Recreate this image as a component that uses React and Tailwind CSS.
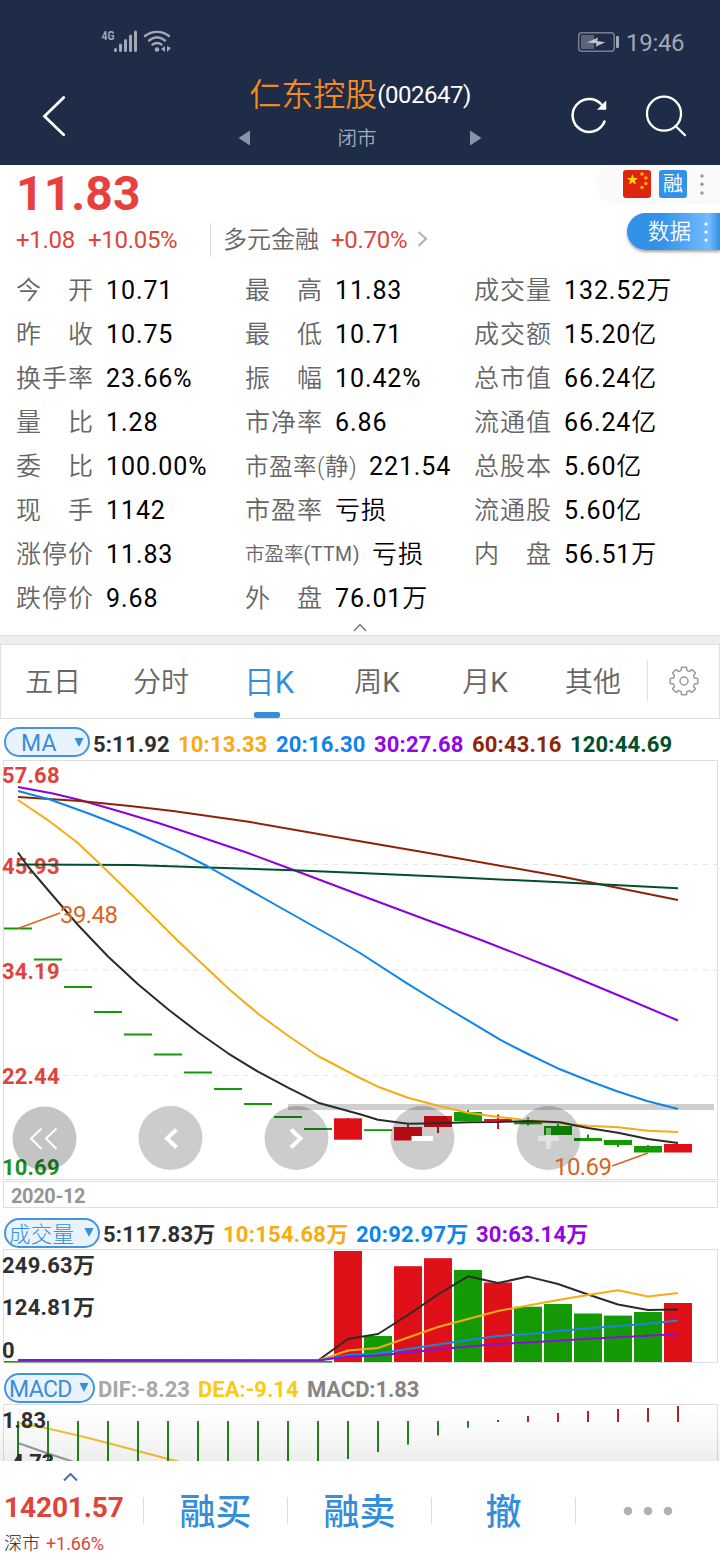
import React from "react";

const UI = "font-[Roboto,'Noto_Sans_CJK_SC',sans-serif]";

const stats = [
  [["今", "开"], "10.71", ["最", "高"], "11.83", "成交量", "132.52万"],
  [["昨", "收"], "10.75", ["最", "低"], "10.71", "成交额", "15.20亿"],
  ["换手率", "23.66%", ["振", "幅"], "10.42%", "总市值", "66.24亿"],
  [["量", "比"], "1.28", "市净率", "6.86", "流通值", "66.24亿"],
  [["委", "比"], "100.00%", "市盈率(静)", "221.54", "总股本", "5.60亿"],
  [["现", "手"], "1142", "市盈率", "亏损", "流通股", "5.60亿"],
  ["涨停价", "11.83", "市盈率(TTM)", "亏损", ["内", "盘"], "56.51万"],
  ["跌停价", "9.68", ["外", "盘"], "76.01万", null, null],
];

const GREEN = "#149a05";
const RED = "#df1017";

const maLines = [
  ["#8a00e0", "18,787 53,793.5 80,800 120,811.5 160,823.5 200,836.7 248,853 297,871.3 360,895 427,920 483,940.7 560,971 620,996 678,1020.5"],
  ["#8c2208", "18,797 80,801 130,806 173,811 247,821.5 360,841.3 427,852.7 560,876.3 678,900"],
  ["#00512a", "18,864.5 133,865 200,867.3 293,870.3 360,873 450,877 560,882.3 678,888.2"],
  ["#0d84ee", "18,791 50,799.5 90,814 108,821 133,831 180,852.3 207,866 267,900 338,940 360,953 407,983.3 438,1002.5 470,1021.7 500,1039.7 530,1055 560,1069.3 590,1081.3 617,1091.3 647,1101 678,1109"],
  ["#f7ab14", "18,800 50,821.7 77,842.3 100,864 133,896 177,940 200,961.7 230,990 260,1015.2 287,1035 318,1056 360,1078 378,1086.7 408,1097.7 438,1105.7 468,1112.7 498,1117 528,1120.3 558,1123 588,1125.7 618,1127.3 648,1130.7 678,1132"],
  ["#2b2b2b", "18,852.5 28,866.5 48,890 78,925 108,956.5 138,984.3 168,1009.3 198,1032.3 228,1053.3 258,1071.7 288,1087.7 318,1102.7 360,1114.3 378,1119.7 408,1123.7 438,1123.3 468,1122.3 498,1122 528,1121 560,1122.3 573,1125 588,1128 618,1132.7 648,1139 678,1143"],
];

// Flat sessions: one dash per day
const dashes = [928.5, 959.5, 987, 1012, 1034.5, 1054.5, 1072.5, 1089, 1104, 1117, 1129];

// [index, colour, top, bottom, wick top, wick bottom]
const candles = [
  [11, RED, 1118.3, 1139.7, 1118, 1139],
  [12, GREEN, 1129.2, 1131, 1130, 1130],
  [13, RED, 1127, 1140.5, 1125, 1140],
  [14, RED, 1116, 1127, 1116, 1133],
  [15, GREEN, 1112, 1121, 1110, 1121],
  [16, RED, 1119, 1121.5, 1114.5, 1129],
  [17, GREEN, 1121.5, 1124.3, 1117.5, 1125.5],
  [18, GREEN, 1126, 1135, 1124, 1135],
  [19, GREEN, 1138, 1141, 1134.5, 1140],
  [20, GREEN, 1140, 1145, 1140, 1147],
  [21, GREEN, 1146, 1152.5, 1145, 1152],
  [22, RED, 1144, 1152.5, 1144, 1152],
];

const volumes = [
  [11, RED, 1251], [12, GREEN, 1336], [13, RED, 1266.2], [14, RED, 1258.2],
  [15, GREEN, 1270], [16, RED, 1282.5], [17, GREEN, 1306.7], [18, GREEN, 1304],
  [19, GREEN, 1313.5], [20, GREEN, 1315.6], [21, GREEN, 1312], [22, RED, 1303],
];

const volumeLines = [
  ["#2b2b2b", "18,1360 318,1360.5 348,1339 378,1334 408,1315 438,1294.5 468,1276.3 498,1283 528,1276.6 558,1284 588,1294.5 618,1304.5 648,1310 678,1309.5"],
  ["#f7ab14", "18,1360 318,1360.5 348,1350.5 378,1348 408,1337.5 438,1327 468,1319 498,1311 528,1305.5 558,1300 588,1295 618,1290.2 648,1296.5 678,1293"],
  ["#1b84e4", "18,1360 318,1360.5 348,1355 378,1353.5 438,1344.5 468,1340 498,1336 528,1334 588,1328.3 648,1323.7 678,1320.5"],
  ["#8a10d8", "18,1360 318,1360.5 348,1356.5 378,1355.5 438,1349.5 468,1346.5 498,1344 558,1340.7 588,1338.8 648,1335.7 678,1334"],
];

const macdBars = [1461, 1461, 1461, 1461, 1461, 1461, 1461, 1461, 1461, 1461, 1461, 1459, 1452, 1444.5, 1435.5, 1427.7, 1420, 1416, 1413, 1411, 1409, 1408, 1406];

function gearPath() {
  const pts = [];
  const steps = [[-17, 10.9], [-13.5, 11.4], [-12, 13.300], [-9, 13.900], [9, 13.900], [12, 13.300], [13.5, 11.4], [17, 10.9]];
  for (let t = 0; t < 8; t++) {
    for (const [offset, r] of steps) {
      const a = ((t * 45 + offset) * Math.PI) / 180;
      pts.push(`${(15 + r * Math.sin(a)).toFixed(2)} ${(15 - r * Math.cos(a)).toFixed(2)}`);
    }
  }
  return `M${pts.join("L")}Z`;
}

function Label({ value }) {
  if (Array.isArray(value)) {
    return (
      <span className="flex w-[78px] justify-between text-[25px] font-[350] text-[#666]">
        <span className="w-[26px]">{value[0]}</span>
        <span className="w-[26px]">{value[1]}</span>
      </span>
    );
  }
  if (value.includes("TTM")) {
    return <span className="w-[115px] text-[19.5px] font-[350] text-[#666]">市盈率<span className="font-normal tracking-[0.5px]">(TTM)</span></span>;
  }
  if (value.includes("静")) {
    return <span className="w-[112px] text-[23.5px] tracking-[0.5px] font-[350] text-[#666]">{value}</span>;
  }
  return <span className="w-[78px] text-[25px] tracking-[1px] font-[350] text-[#666]">{value}</span>;
}

function Value({ value }) {
  const unit = /[万亿]$/.test(value) ? value.slice(-1) : "";
  const number = unit ? value.slice(0, -1) : value;
  const cjk = value === "亏损";
  return (
    <span className={cjk ? "text-[25px] tracking-[1px] font-[350] text-black" : "text-[25px] tracking-[0.9px] text-black"}>
      {number}
      {unit && <span className="font-[350]">{unit}</span>}
    </span>
  );
}

function StatusBar() {
  return (
    <div className="flex h-[60px] items-end justify-between pl-[101px] pr-[35px]">
      <svg className="mb-[4px] h-[30px] w-[76px]" viewBox="101 26 76 30" fill="none">
        <text x="101.5" y="40" fontSize="13" fontWeight="700" fill="#a2a8b5" textLength="13" lengthAdjust="spacingAndGlyphs" fontFamily="Roboto">4G</text>
        <g stroke="#a2a8b5" strokeWidth="3" strokeLinecap="round">
          <path d="M115.500 49.500v1M120.500 45v5.500M125.500 40.500v10M130.500 36v14.500M135.500 32v18.500" />
        </g>
        <g stroke="#a2a8b5" strokeWidth="2.400" strokeLinecap="round">
          <path d="M145 36c7-5.500 17-5.500 24 0M149 40.500c5-4 11-4 16 0M152.500 44.600c2.800-2 6.200-2 9 0" />
        </g>
        <circle cx="157" cy="49.500" r="2.300" fill="#a2a8b5" />
        <path d="M165 46v6l-4-3zM167 46v6l4-4z" fill="#a2a8b5" />
      </svg>
      <div className="mb-[4px] flex items-center gap-[7px]">
        <svg className="h-[22px] w-[42px]" viewBox="577 31 42 22" fill="none">
          <rect x="578.700" y="32.700" width="35.500" height="18.500" rx="3" stroke="#778091" strokeWidth="1.500" />
          <rect x="581" y="35" width="13" height="14" fill="#5b6579" />
          <path d="M587 42.500l11-5-.8 3.500 8 1.200-9.500 4.500.8-3.500z" fill="#bfc4cd" />
          <rect x="616" y="36" width="3" height="12" rx="1" fill="#a2a8b5" />
        </svg>
        <span className="h-[28px] w-[59px] text-[24px] leading-[30px] tracking-[-0.300px] text-[#a2a8b5]">19:46</span>
      </div>
    </div>
  );
}

function Header() {
  return (
    <header className="flex h-[165px] flex-col bg-[#1e2c48]">
      <StatusBar />
      <div className="flex h-[105px]">
        <svg className="ml-[40px] mt-[32px] h-[48px] w-[30px]" viewBox="40 92 30 48" fill="none">
          <path d="M63.700 97.500L44.500 116.300L63.700 134.800" stroke="#fff" strokeWidth="2.800" strokeLinecap="round" />
        </svg>
        <div className="ml-[160px] mt-[17px] flex w-[260px] flex-col items-center">
          <div className="flex h-[36px] items-center whitespace-nowrap">
            <span className="text-[32px] leading-[36px] font-[350] text-[#f58a1c]">仁东控股</span>
            <span className="text-[24px] leading-[36px] tracking-[-0.500px] text-white">(002647)</span>
          </div>
          <div className="mt-[11px] flex h-[28px] w-[244px] items-center justify-between">
            <svg className="h-[16px] w-[12px]" viewBox="0 0 12 16"><path d="M12 0.500v15L0.500 8z" fill="#8c93a2" /></svg>
            <span className="mr-[6px] mt-[2px] text-[19.500px] font-[350] text-[#a4abb8]">闭市</span>
            <svg className="h-[16px] w-[12px]" viewBox="0 0 12 16"><path d="M0 0.500v15L11.500 8z" fill="#8c93a2" /></svg>
          </div>
        </div>
        <svg className="ml-auto mr-[30px] mt-[30px] h-[50px] w-[124px]" viewBox="566 90 124 50" fill="none" stroke="#fff">
          <path d="M604.500 121.500A16.500 16.500 0 1 1 601.500 104.500" strokeWidth="2.500" strokeLinecap="round" />
          <path d="M606 101v8.500h-8.500z" fill="#fff" strokeWidth="0.500" />
          <circle cx="664" cy="113.700" r="17" strokeWidth="2.300" />
          <path d="M675.500 126L685 135.300" strokeWidth="2.300" strokeLinecap="round" />
        </svg>
      </div>
    </header>
  );
}

function Summary() {
  return (
    <section className="flex h-[103px] justify-between">
      <div className="flex flex-col">
        <div className="h-[56px] pl-[16px] text-[48px] font-bold leading-[57px] tracking-[0.100px] text-[#e8403a]">11.83</div>
        <div className="flex h-[38px] items-center whitespace-nowrap text-[24px] text-[#dc453c]">
          <span className="ml-[16px] w-[72px] tracking-[-0.300px]">+1.08</span>
          <span className="w-[122px] tracking-[-0.300px]">+10.05%</span>
          <span className="h-[34px] w-px bg-[#dcdcdc]" />
          <span className="ml-[12px] w-[108px] text-[24px] font-[350] text-[#666]">多元金融</span>
          <span className="tracking-[-0.300px]">+0.70%</span>
          <svg className="-mt-[3px] ml-[10px] h-[16px] w-[12px]" viewBox="0 0 12 16" fill="none"><path d="M1.500 1l7.500 6.700L1.500 15" stroke="#b4b4b4" strokeWidth="2.200" /></svg>
        </div>
      </div>
      <div className="flex flex-col items-end">
        <div className="flex h-[39px] w-[124px] items-center rounded-l-full bg-[#fafafa] pl-[27px]">
          <svg className="-mt-px h-[28px] w-[28px]" viewBox="0 0 28 28">
            <rect width="28" height="28" rx="3" fill="#df2510" />
            <path d="M9.500 4l1.500 4h4l-3.200 2.500 1.200 4.200-3.500-2.500-3.500 2.500 1.200-4.200L4 8h4z" fill="#ffd900" />
            <g fill="#f8b010"><circle cx="19" cy="4" r="1.800" /><circle cx="22.800" cy="8" r="1.800" /><circle cx="22.800" cy="13.500" r="1.800" /><circle cx="19" cy="17.500" r="1.800" /></g>
          </svg>
          <span className="-mt-px ml-[8px] flex h-[28px] w-[28px] items-center justify-center rounded-[3px] bg-[#3391e8] text-[20px] leading-none text-white">融</span>
          <svg className="ml-[13px] h-[22px] w-[4px]" viewBox="0 0 4 22" fill="#999"><circle cx="2" cy="2" r="1.700" /><circle cx="2" cy="10.300" r="1.700" /><circle cx="2" cy="19" r="1.700" /></svg>
        </div>
        <div className="mt-[9px] flex h-[37px] w-[93px] items-center rounded-l-full bg-[linear-gradient(90deg,#3391e7_0%,#3391e7_35%,#72bbff_88%,#338fe3_100%)] pl-[21px] shadow-[0_2px_3px_rgba(0,0,0,0.350)]">
          <span className="text-[21.500px] leading-none font-[350] text-white">数据</span>
          <svg className="ml-[13px] h-[20px] w-[4px]" viewBox="0 0 4 20" fill="#fff"><circle cx="2" cy="2" r="1.600" /><circle cx="2" cy="10" r="1.600" /><circle cx="2" cy="18" r="1.600" /></svg>
        </div>
      </div>
    </section>
  );
}

function Stats() {
  return (
    <section className="flex h-[367px] flex-col pt-px">
      {stats.map((row, i) => (
        <div key={i} className="grid h-[44px] grid-cols-[229px_229px_1fr] pl-[16px] leading-[44px] whitespace-nowrap">
          {[0, 2, 4].map((c) =>
            row[c] ? (
              <div key={c} className="flex items-center gap-[12px]">
                <Label value={row[c]} />
                <Value value={row[c + 1]} />
              </div>
            ) : null
          )}
        </div>
      ))}
      <svg className="mx-auto mt-px h-[10px] w-[16px]" viewBox="0 0 16 10" fill="none"><path d="M2 9l6-6.500L14 9" stroke="#777" strokeWidth="1.500" /></svg>
    </section>
  );
}

function Tabs() {
  const tab = "flex w-[108px] shrink-0 justify-center pt-[3px] text-[28px] font-[350] text-[#666]";
  return (
    <nav className="flex h-[75px] items-center border border-[#dfdfdf] bg-white">
      <span className={`${tab} -ml-[2px]`}>五日</span>
      <span className={tab}>分时</span>
      <span className="relative flex w-[108px] shrink-0 justify-center pt-[4px] text-[31px] font-[350] text-[#358edc]">
        日<span className="font-normal">K</span>
        <span className="absolute -bottom-[11px] left-[39px] h-[6px] w-[26px] rounded-[2px] bg-[#358edc]" />
      </span>
      <span className={tab}>周<span className="font-normal">K</span></span>
      <span className={tab}>月<span className="font-normal">K</span></span>
      <span className={tab}>其他</span>
      <span className="-mt-px h-[40px] w-px bg-[#dfdfdf]" />
      <svg className="-mt-[2px] ml-[21px] h-[30px] w-[30px]" viewBox="0 0 30 30" fill="none" stroke="#999" strokeWidth="1.500" strokeLinejoin="round">
        <path d={gearPath()} />
        <circle cx="15" cy="15" r="4" />
      </svg>
    </nav>
  );
}

function Selector({ label, className }) {
  return (
    <span className={`flex h-[30px] shrink-0 items-center rounded-full border-2 border-[#4594de] bg-[#e8f3fe] leading-[26px] text-[#3a8ddb] ${className}`}>
      <span className="pt-[4px]">{label}</span>
      <svg className="ml-auto h-[9px] w-[10px]" viewBox="0 0 10 9"><path d="M0.500 0h9L5 9z" fill="#3a8ddb" /></svg>
    </span>
  );
}

function AxisText({ x, y, w, fill, children, size = 22, weight = 700 }) {
  return (
    <text x={x} y={y} fontSize={size} fontWeight={weight} fill={fill} textLength={w} fontFamily="Roboto, 'Noto Sans CJK SC', sans-serif">
      {children}
    </text>
  );
}

function Poly({ color, points }) {
  return <polyline points={points} fill="none" stroke={color} strokeWidth="2" strokeLinejoin="round" />;
}

function PriceChart() {
  return (
    <svg className="block h-[456px] w-[720px]" viewBox="0 760 720 456">
      <rect x="3.500" y="760.500" width="714" height="419" fill="none" stroke="#dedede" />
      <rect x="3.500" y="1181.500" width="714" height="26" fill="none" stroke="#dedede" />
      <g stroke="#e6e6e6" strokeDasharray="5 5">
        <path d="M3 864.500H717M3 970H717M3 1075.500H717" />
      </g>
      <AxisText x="2" y="783" w="57.500" fill="#e0433b">57.68</AxisText>
      <AxisText x="2" y="873.500" w="57.500" fill="#e0433b">45.93</AxisText>
      <AxisText x="2" y="978.500" w="57.500" fill="#e0433b">34.19</AxisText>
      <AxisText x="2" y="1084" w="57.500" fill="#e0433b">22.44</AxisText>
      <AxisText x="2" y="1175" w="57.500" fill="#1b9125">10.69</AxisText>
      <AxisText x="11" y="1203" w="74.500" fill="#959595" size={20}>2020-12</AxisText>
      <rect x="288" y="1104" width="426" height="6" fill="#cfcfcf" />
      {dashes.map((y, i) => (
        <rect key={y} x={4 + 30 * i} y={y - 1} width="28" height="2" fill={GREEN} />
      ))}
      {candles.map(([i, color, top, bottom, high, low]) => (
        <g key={i} fill={color}>
          <rect x={4 + 30 * i} y={top} width="28" height={bottom - top} />
          <rect x={17 + 30 * i} y={high} width="2" height={low - high} />
        </g>
      ))}
      <g fill="#000" fillOpacity="0.200">
        <circle cx="44.500" cy="1138.500" r="32" fillOpacity="0.230" />
        <circle cx="170.500" cy="1138" r="32" />
        <circle cx="296.500" cy="1138" r="32" />
        <circle cx="422.500" cy="1138" r="32" />
        <circle cx="548.500" cy="1138" r="32" />
      </g>
      <g fill="none" stroke="#fff">
        <path d="M41.500 1128.500L31 1138.500L41.500 1149M56.500 1128.500L46 1138.500L56.500 1149" strokeWidth="2" />
        <path d="M176.500 1129.500L167 1138.500L176.500 1147.500M291 1129.500L300.500 1138.500L291 1147.500" strokeWidth="4" />
        <path d="M411.500 1138.500H433" strokeWidth="5" />
        <path d="M538 1138.500H559M548.500 1128V1149" strokeWidth="5" strokeOpacity="0.450" />
      </g>
      {maLines.map(([color, points]) => <Poly key={color} color={color} points={points} />)}
      <g stroke="#d9661c" strokeWidth="1.700"><path d="M18 928.500L60 913M612 1166L648 1153" /></g>
      <AxisText x="60" y="923" w="58" fill="#d9661c" size={24} weight={400}>39.48</AxisText>
      <AxisText x="554" y="1175" w="58" fill="#d9661c" size={24} weight={400}>10.69</AxisText>
    </svg>
  );
}

function VolumeChart() {
  return (
    <svg className="block h-[122px] w-[720px]" viewBox="0 1249 720 122">
      <rect x="3.500" y="1249.500" width="714" height="113" fill="none" stroke="#dedede" />
      <rect x="4" y="1361" width="328" height="1.500" fill={GREEN} />
      {volumes.map(([i, color, top]) => (
        <rect key={i} x={4 + 30 * i} y={top} width="28" height={1362 - top} fill={color} />
      ))}
      {volumeLines.map(([color, points]) => <Poly key={color} color={color} points={points} />)}
      <AxisText x="2" y="1273" w="93" fill="#303030">249.63万</AxisText>
      <AxisText x="2" y="1315" w="93" fill="#303030">124.81万</AxisText>
      <AxisText x="2" y="1358" w="12.500" fill="#303030">0</AxisText>
    </svg>
  );
}

function MacdChart() {
  return (
    <svg className="block h-[57px] w-[720px]" viewBox="0 1404 720 57">
      <defs>
        <linearGradient id="fade" x1="0" y1="0" x2="0" y2="1">
          <stop offset="0" stopColor="#000" stopOpacity="0" />
          <stop offset="0.400" stopColor="#000" stopOpacity="0.015" />
          <stop offset="1" stopColor="#000" stopOpacity="0.070" />
        </linearGradient>
      </defs>
      <path d="M3.500 1461V1404.500H717.500V1461" fill="none" stroke="#dedede" />
      <Poly color="#f2c62e" points="18,1423 48,1428.500 78,1435.500 108,1443 138,1451 168,1459 178,1461.500" />
      <Poly color="#9c9c9c" points="18,1443 48,1453.500 74,1462" />
      {macdBars.map((y, i) => {
        const up = i > 15;
        return <rect key={i} x={17 + 30 * i} y={up ? y : 1421} width="2" height={up ? 1422 - y : y - 1421} fill={up ? "#ae232a" : "#1f861a"} />;
      })}
      <AxisText x="2" y="1428" w="44" fill="#303030">1.83</AxisText>
      <AxisText x="3" y="1470" w="51" fill="#303030">-4.73</AxisText>
      <rect x="0" y="1404" width="720" height="57" fill="url(#fade)" />
    </svg>
  );
}

function BottomBar() {
  const action = "flex w-[143px] shrink-0 justify-center pt-[4px] text-[36px] font-medium leading-[40px] text-[#358edc]";
  const rule = "h-[27px] w-px shrink-0 bg-[#dedede]";
  return (
    <footer className="flex h-[99px] bg-white">
      <div className="flex w-[143px] flex-col">
        <svg className="ml-[62px] mt-[10px] h-[11px] w-[17px]" viewBox="0 0 17 11" fill="none"><path d="M2 9.500l6.500-6.500 6.500 6.500" stroke="#4b6fa8" strokeWidth="2" /></svg>
        <div className="mt-[9px] h-[34px] pl-[4px] text-[28px] font-bold leading-[34px] tracking-[-0.100px] text-[#e0433b]">14201.57</div>
        <div className="mt-[7px] flex h-[22px] items-center gap-[6px] pl-[4px] text-[18px]">
          <span className="font-light text-[#222]">深市</span>
          <span className="tracking-[-0.100px] text-[#e0433b]">+1.66%</span>
        </div>
      </div>
      <div className="flex h-[99px] flex-1 items-center">
        <span className={rule} />
        <span className={action}>融买</span>
        <span className={rule} />
        <span className={action}>融卖</span>
        <span className={rule} />
        <span className={action}>撤</span>
        <span className={rule} />
        <svg className="ml-[47px] h-[10px] w-[50px]" viewBox="0 0 50 10" fill="#b0b0b0"><circle cx="5" cy="5" r="4.300" /><circle cx="25" cy="5" r="4.300" /><circle cx="45" cy="5" r="4.300" /></svg>
      </div>
    </footer>
  );
}

export default function App() {
  return (
    <main className={`flex h-[1560px] w-[720px] flex-col overflow-hidden bg-white ${UI}`}>
      <Header />
      <Summary />
      <Stats />
      <div className="h-[9px] border-t border-[#dedede] bg-[#eeeeee]" />
      <Tabs />
      <div className="flex h-[41px] items-center whitespace-nowrap pt-[10px] pl-[4px] text-[22px] font-bold tracking-[0.150px]">
        <Selector label="MA" className="-mt-[5px] w-[86px] pl-[15px] pr-[4px] text-[23px] font-normal" />
        <span className="ml-[3px] w-[85px] text-[#2f2f2f]">5:11.92</span>
        <span className="w-[98px] text-[#f7ab14]">10:13.33</span>
        <span className="w-[98px] text-[#0d84ee]">20:16.30</span>
        <span className="w-[98px] text-[#9208e4]">30:27.68</span>
        <span className="w-[98px] text-[#902508]">60:43.16</span>
        <span className="text-[#00512a]">120:44.69</span>
      </div>
      <PriceChart />
      <div className="flex h-[33px] items-center whitespace-nowrap pl-[4px] text-[22px] font-bold tracking-[0.250px]">
        <Selector label="成交量" className="w-[96px] pl-[3px] pr-[4px] text-[21.500px] font-light" />
        <span className="ml-[3px] mt-[3px] w-[120px] text-[#2f2f2f]">5:117.83万</span>
        <span className="mt-[3px] w-[133px] text-[#f7ab14]">10:154.68万</span>
        <span className="mt-[3px] w-[120px] text-[#0d84ee]">20:92.97万</span>
        <span className="mt-[3px] text-[#9208e4]">30:63.14万</span>
      </div>
      <VolumeChart />
      <div className="flex h-[33px] items-center whitespace-nowrap pl-[4px] text-[22px] font-bold">
        <Selector label="MACD" className="w-[91px] pl-[3px] pr-[4px] text-[23px] font-normal tracking-[-0.600px]" />
        <span className="ml-[3px] mt-[4px] w-[100px] text-[#a8a8a8]">DIF:-8.23</span>
        <span className="mt-[4px] w-[109px] text-[#fbcb12]">DEA:-9.14</span>
        <span className="mt-[4px] tracking-[-0.100px] text-[#858585]">MACD:1.83</span>
      </div>
      <MacdChart />
      <BottomBar />
    </main>
  );
}
